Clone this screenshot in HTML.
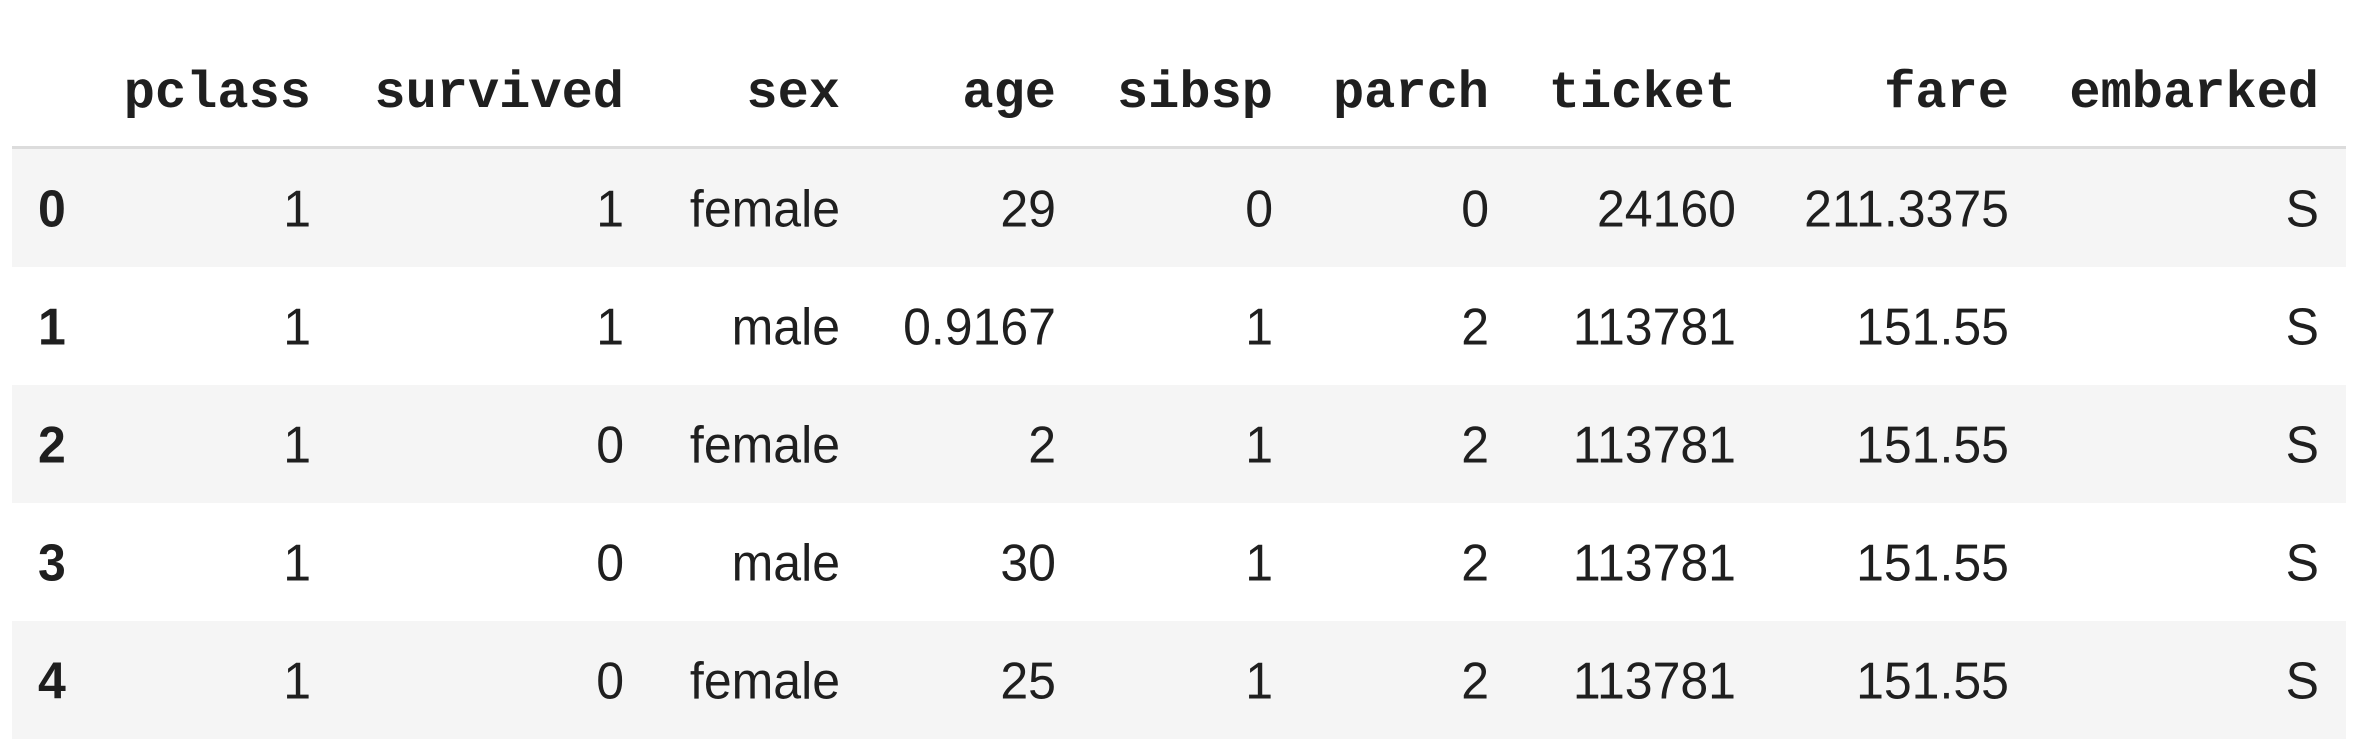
<!DOCTYPE html>
<html><head><style>
body{margin:0;width:2356px;height:744px;background:#fff;position:relative;overflow:hidden;color:#1f1f1f}
.h{position:absolute;top:66px;font:bold 52px "Liberation Mono",monospace;line-height:56px}
.row{position:absolute;left:12px;width:2334px;height:118px}
.row.s{background:#f5f5f5}
.c{position:absolute;top:0;height:118px;font:50px "Liberation Sans",sans-serif;line-height:120px;transform:scaleY(1.04)}
.i{font-weight:bold;left:26px}
.line{position:absolute;left:12px;top:146px;width:2334px;height:3px;background:#dcdcdc}
</style></head><body>
<div class="line"></div>
<div id="hdr"></div>
<div id="rows"></div>
<script>
var R=[311,624,840,1056,1273,1489,1736,2009,2319];
var H=["pclass","survived","sex","age","sibsp","parch","ticket","fare","embarked"];
var D=[["1","1","female","29","0","0","24160","211.3375","S"],
["1","1","male","0.9167","1","2","113781","151.55","S"],
["1","0","female","2","1","2","113781","151.55","S"],
["1","0","male","30","1","2","113781","151.55","S"],
["1","0","female","25","1","2","113781","151.55","S"]];
var h="";for(var k=0;k<9;k++)h+='<div class="h" style="right:'+(2356-R[k])+'px">'+H[k]+'</div>';
document.getElementById("hdr").innerHTML=h;
var s="";for(var r=0;r<5;r++){s+='<div class="row'+(r%2==0?' s':'')+'" style="top:'+(149+r*118)+'px"><div class="c i">'+r+'</div>';
for(var k=0;k<9;k++)s+='<div class="c" style="right:'+(2346-R[k])+'px">'+D[r][k]+'</div>';s+='</div>';}
document.getElementById("rows").innerHTML=s;
</script>
</body></html>
